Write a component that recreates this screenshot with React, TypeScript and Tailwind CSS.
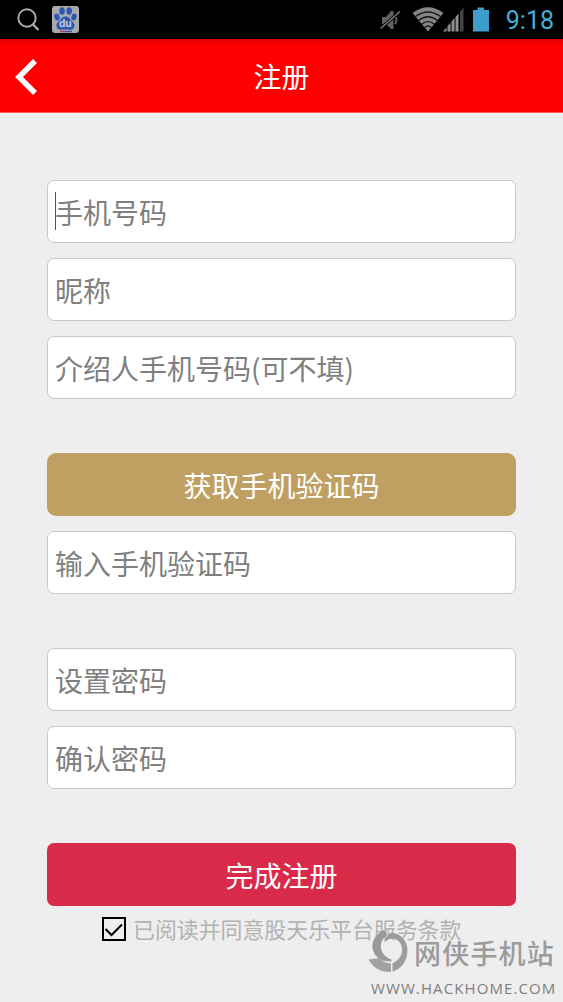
import React, { useState } from 'react';

const Field = ({ placeholder, type = 'text', focused = false }: { placeholder: string; type?: string; focused?: boolean }) => {
  const [value, setValue] = useState('');

  return (
    <div className="relative h-[63px] w-full">
      <input
        type={type}
        value={value}
        placeholder={placeholder}
        onChange={(e) => setValue(e.target.value)}
        className="block h-full w-full rounded-[7px] border-[1.5px] border-[#c8c8c8] bg-white px-[7px] text-[28px] text-[#333] outline-none placeholder:text-[#808080] placeholder:opacity-100"
      />
      {focused && <span className="absolute left-[7.5px] top-[12px] h-[38px] w-px bg-[#555]" />}
    </div>
  );
};

const StatusBar = () => (
  <div className="flex h-[39px] shrink-0 items-center bg-black">
    <svg width="24" height="24" viewBox="0 0 24 24" className="ml-4" fill="none" stroke="#aaa" strokeWidth="2">
      <circle cx="11" cy="10" r="8.7" />
      <path d="M17 16.5l5.5 5.5" strokeWidth="2.4" />
    </svg>
    {/* Baidu */}
    <svg width="27" height="27" viewBox="0 0 27 27" className="ml-3">
      <rect width="27" height="27" rx="3" fill="#aaaaac" />
      <g fill="#2c58b4">
        <ellipse cx="10" cy="5" rx="2.8" ry="3.8" />
        <ellipse cx="17.2" cy="5" rx="2.8" ry="3.8" />
        <ellipse cx="5" cy="11" rx="2.6" ry="3.5" transform="rotate(-12 5 11)" />
        <ellipse cx="22" cy="11" rx="2.6" ry="3.5" transform="rotate(12 22 11)" />
        <path d="M13.5 10.5c-3.5 0-4 2.4-6 4.2-2 1.7-3.5 3-3 5.5.6 3.2 3.3 3.8 5.5 3.5 2.3-.3 4.7-.3 7 0 2.2.3 4.9-.3 5.5-3.5.4-2.5-1-3.800-3-5.500-2-1.800-2.500-4.200-6-4.200z" />
      </g>
      <path d="M8 25.5h6" stroke="#b83a55" strokeWidth="1.5" />
      <path d="M14 25.5h6" stroke="#2c58b4" strokeWidth="1.5" />
      <text x="13.3" y="21" textAnchor="middle" fontSize="10.5" fontWeight="bold" fill="#d0d0dc" fontFamily="Liberation Sans, sans-serif">du</text>
    </svg>
    <div className="ml-auto flex items-center">
      {/* muted */}
      <svg width="22" height="24" viewBox="0 0 22 24">
        <path d="M2 9h4l5-6h2.5v18H11l-5-5H2z" fill="#606060" />
        <path d="M15 8q3 4 0 8" fill="none" stroke="#606060" strokeWidth="2" />
        <path d="M0.5 20.5L20 3.5" stroke="#000" strokeWidth="3" />
        <path d="M0.5 20.5L20 3.5" stroke="#808080" strokeWidth="1.5" />
      </svg>
      {/* wifi */}
      <svg width="32" height="25" viewBox="0 0 32 25" className="ml-[10px]">
        <path d="M0.5 6Q16-5.5 31.5 6L16 24.5z" fill="#858585" />
        <g fill="none" stroke="#181818" strokeWidth="1.4">
          <path d="M3.5 9.5Q16 .5 28.5 9.5" />
          <path d="M6.5 13.5Q16 6 25.5 13.5" />
          <path d="M9.5 17.3Q16 12 22.5 17.3" />
          <path d="M12.5 20.7Q16 17.5 19.5 20.7" />
        </g>
      </svg>
      {/* signal */}
      <svg width="21" height="25" viewBox="0 0 21 25" className="-ml-px">
        <path d="M0 24.5L3.5 20.4V24.5z" fill="#909090" />
        <path d="M4.5 24.5V19L7.5 15.7V24.5z" fill="#909090" />
        <path d="M8.5 24.5V14.5L11.5 11V24.5z" fill="#909090" />
        <path d="M12.5 24.5V10L15.5 6.5V24.5z" fill="#909090" />
        <path d="M17 24.5V5L20.5 .5V24.5z" fill="#444" />
      </svg>
      {/* battery */}
      <svg width="18" height="25" viewBox="0 0 18 25" className="ml-[8px]">
        <path d="M1 3h4.5V.5h6.5V3H17v21.5H1z" fill="#3d9ecb" />
      </svg>
      <span className="ml-[16px] mr-[9px] mt-[2px] font-[Roboto,sans-serif] text-[25px] leading-none text-[#46aedb]">9:18</span>
    </div>
  </div>
);

const Watermark = () => (
  <div className="absolute left-[368px] top-[930px] h-[70px] w-[195px] text-[#9b9b9b]">
    <svg width="42" height="44" viewBox="0 0 42 44" className="absolute left-0 top-0">
      <path d="M16 0C8 4 3.5 11 4.5 18c1.2 8 8 14 19 13.500v-2C16 27 12 21 13 14c.5-3.500 2.500-6 6.500-9.500z" fill="#999" />
      <path d="M.5 29.5L11.5 28c3.5 3.500 7 5 11.500 5.500V42C13 42.500 5 38 .5 29.500z" fill="#a2a2a2" />
      <path d="M24 2.500C33 4 39.500 11 39.500 20c0 11-6 19-15 21.500v-8.300C30 31 34.500 25.500 34 18.500c-.5-5.500-4.500-10-9.500-10-3 0-5.500 1.500-8 4 .8-5 3-8.500 7.500-10z" fill="#9d9d9d" />
    </svg>
    <span className="absolute left-[46px] top-[5px] whitespace-nowrap text-[27px] font-medium leading-[36px] tracking-[1.2px]">网侠手机站</span>
    <span className="absolute left-[3px] top-[49px] whitespace-nowrap font-['Open_Sans',sans-serif] text-[15px] font-medium leading-[18px] tracking-[1.1px] text-[#7d7d7d]">WWW.HACKHOME.COM</span>
  </div>
);

export default function App() {
  const [agreed, setAgreed] = useState(true);

  return (
    <div className="relative flex h-[1002px] w-[563px] flex-col overflow-hidden bg-[#eee] font-['Noto_Sans_CJK_SC',sans-serif]">
      <StatusBar />

      <header className="flex h-[74px] shrink-0 items-center border-b border-[#f45c55] bg-[#fe0000] bg-linear-to-b from-[#dc0000] to-[#fe0000] to-8%">
        <button aria-label="返回" className="ml-[15px] mt-[2px] w-[24px]">
          <svg width="24" height="38" viewBox="0 0 24 38" fill="none" stroke="#fff" strokeWidth="5.5">
            <path d="M20 3L4 19l16 16" />
          </svg>
        </button>
        <h1 className="mr-[39px] flex-1 text-center text-[28px] leading-none text-white">注册</h1>
      </header>

      <main className="flex flex-col px-[47px] pt-[67px]">
        <div className="flex flex-col gap-[15px]">
          <Field placeholder="手机号码" focused />
          <Field placeholder="昵称" />
          <Field placeholder="介绍人手机号码(可不填)" />
        </div>

        <div className="mt-[54px] flex flex-col gap-[15px]">
          <button className="h-[63px] w-full rounded-[9px] bg-[#bfa062] text-[28px] text-white">获取手机验证码</button>
          <Field placeholder="输入手机验证码" />
        </div>

        <div className="mt-[54px] flex flex-col gap-[15px]">
          <Field placeholder="设置密码" type="password" />
          <Field placeholder="确认密码" type="password" />
        </div>

        <button className="mt-[54px] h-[63px] w-full rounded-[7px] bg-[#d92a4a] text-[28px] text-white">完成注册</button>

        <div className="ml-[55px] mt-[11px] flex items-center">
          <button
            aria-label="同意"
            onClick={() => setAgreed(!agreed)}
            className="h-[24px] w-[24px] border-2 border-black"
          >
            {agreed && (
              <svg width="20" height="20" viewBox="0 0 20 20" fill="none" stroke="#000" strokeWidth="2">
                <path d="M1.5 10l6 6L18 5.5" />
              </svg>
            )}
          </button>
          <span className="ml-[7px] whitespace-nowrap text-[21.9px] leading-[24px] text-[#b2b2b2]">已阅读并同意股天乐平台服务条款</span>
        </div>
      </main>

      <Watermark />
    </div>
  );
}
